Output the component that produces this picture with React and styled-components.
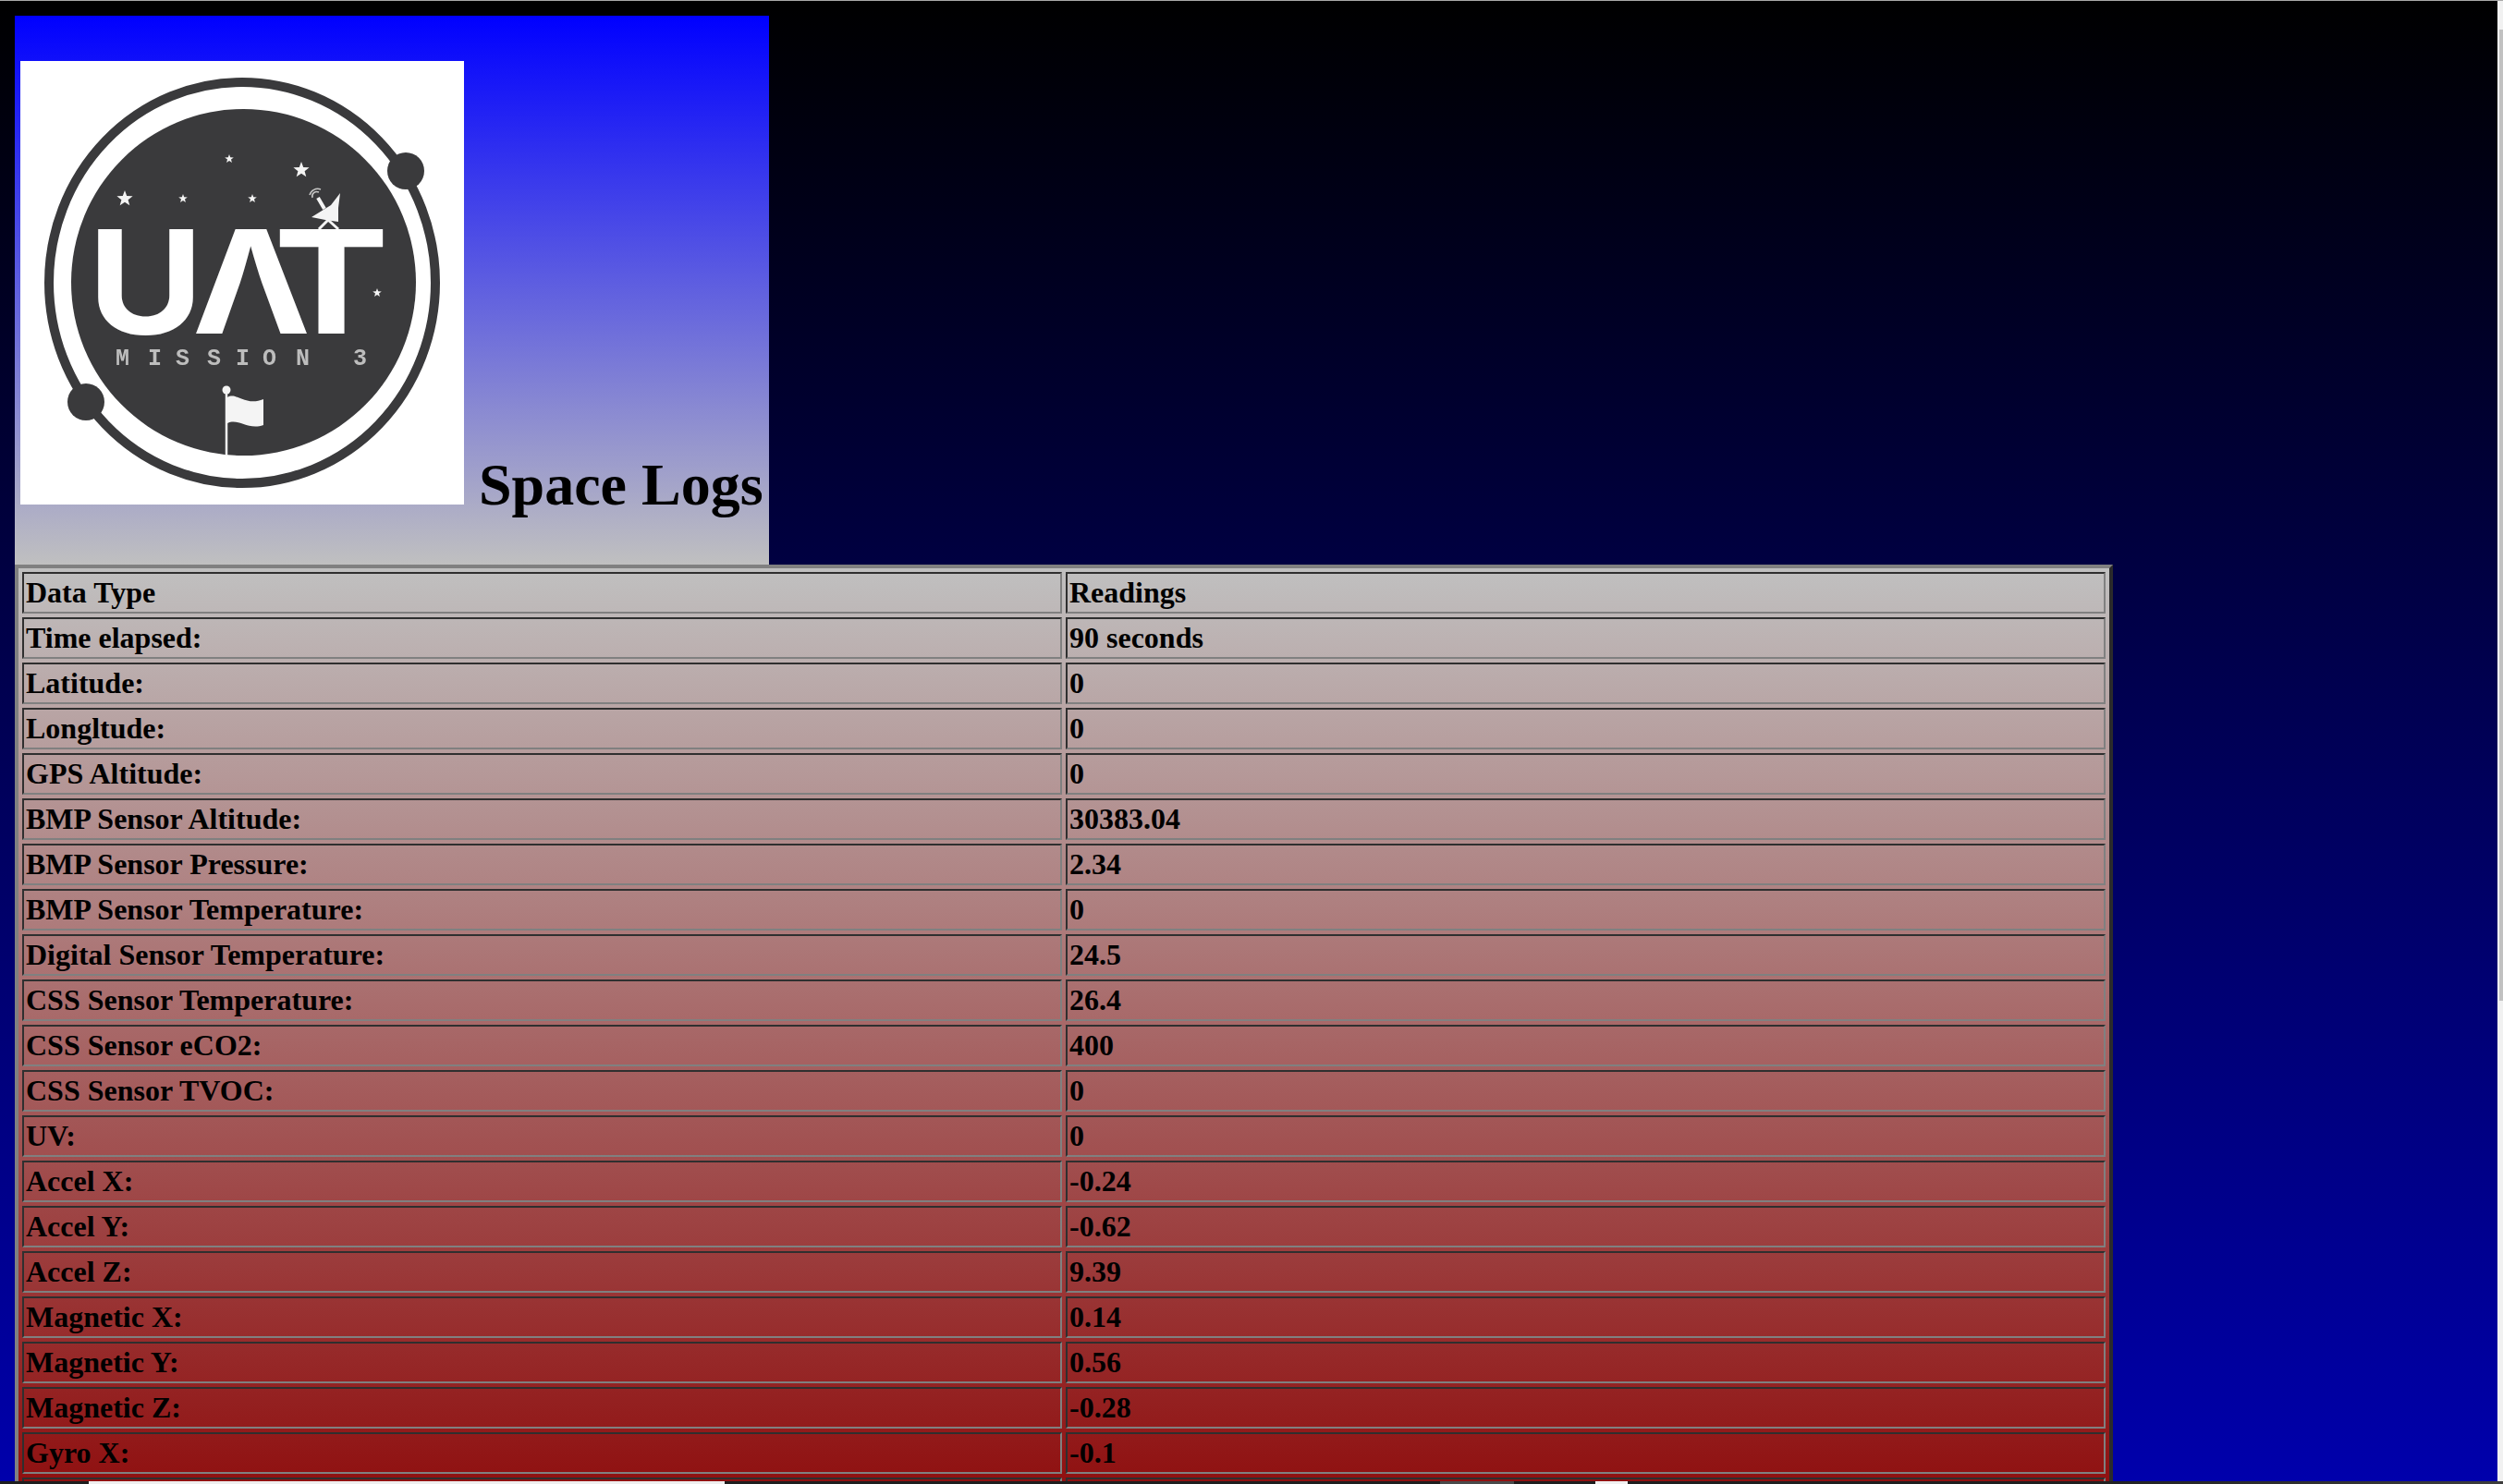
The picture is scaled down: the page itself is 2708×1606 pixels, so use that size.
import React from "react";
import styled, { createGlobalStyle } from "styled-components";

const Global = createGlobalStyle`
  html, body {
    margin: 0;
    height: 1606px;
    overflow: hidden;
  }
  body {
    background: linear-gradient(to bottom, #000000, #0000ac);
    color: #000;
    font-family: "Liberation Serif", "Times New Roman", serif;
  }
`;

const Page = styled.main`
  padding: 17px 0 0 16px;
`;

const Header = styled.header`
  width: fit-content;
  padding: 49px 6px 54px 6px;
  background: linear-gradient(to bottom, #0000ff, #c0c0c0);
`;

const Title = styled.h1`
  margin: 0;
  font-size: 64px;
  font-weight: 700;
  line-height: 1;
  white-space: pre;
`;

const LogoSvg = styled.svg`
  display: inline-block;
  width: 480px;
  height: 480px;
  vertical-align: baseline;
  background: #fff;
`;

const Table = styled.table`
  width: 2270px;
  table-layout: fixed;
  border-collapse: separate;
  border-spacing: 4px;
  border-style: solid;
  border-width: 4px;
  border-color: #808080 #2b2b2b #2b2b2b #808080;
  background: linear-gradient(to bottom, #c0c0c0, #8b0000);
  font-size: 32px;
  font-weight: 700;
`;

const Cell = styled.td`
  padding: 2px;
  border-style: solid;
  border-width: 2px;
  border-color: #2f2f2f #808080 #808080 #2f2f2f;
  line-height: 37px;
  white-space: nowrap;
`;

const TopLine = styled.div`
  position: fixed;
  inset: 0 0 auto 0;
  height: 1px;
  background: #a8a8a8;
`;

const ScrollTrack = styled.div`
  position: fixed;
  top: 1px;
  right: 0;
  bottom: 3px;
  width: 6px;
  background: #f1f1f1;
`;

const ScrollThumb = styled.div`
  width: 4px;
  height: 1051px;
  margin: 31px 0 0 2px;
  background: #c1c1c1;
`;

const BottomStrip = styled.div`
  position: fixed;
  inset: auto 0 0 0;
  height: 3px;
  display: flex;
  background: linear-gradient(to right, #1e1e1e 0%, #1e1e1e 82%, #3c3c3c 100%);
`;

const StripPiece = styled.span`
  display: block;
  width: ${(p) => p.$w}px;
  margin-left: ${(p) => p.$gap}px;
  background: ${(p) => p.$color};
`;

const Star = ({ x, y, r }) => {
  const pts = [];
  for (let i = 0; i < 10; i++) {
    const a = -Math.PI / 2 + (i * Math.PI) / 5;
    const d = i % 2 === 0 ? r : r * 0.42;
    pts.push(`${(x + d * Math.cos(a)).toFixed(1)},${(y + d * Math.sin(a)).toFixed(1)}`);
  }
  return <polygon points={pts.join(" ")} fill="#f4f4f4" />;
};

const LogoLetter = styled.text`
  font-family: Inter, "Liberation Sans", sans-serif;
  font-weight: 700;
  font-size: 155px;
  fill: #ffffff;
`;

const LogoCaption = styled.text`
  font-family: "Liberation Mono", monospace;
  font-size: 25px;
  fill: #bdbdbd;
`;

const Logo = () => (
  <LogoSvg viewBox="22 66 480 480" role="img" aria-label="UAT Mission 3 logo">
    <g style={{ filter: "blur(0.5px)" }}>
      <ellipse cx="262" cy="306" rx="209" ry="217" fill="none" stroke="#3a3a3c" strokeWidth="10" />
      <ellipse cx="263.5" cy="305.5" rx="186.5" ry="187.5" fill="#3a3a3c" />
      <circle cx="439" cy="185" r="20" fill="#3a3a3c" />
      <circle cx="93" cy="435" r="20" fill="#3a3a3c" />
      <Star x={135} y={215} r={9} />
      <Star x={326} y={184} r={9} />
      <Star x={248} y={172} r={5} />
      <Star x={198} y={215} r={5} />
      <Star x={273} y={215} r={5} />
      <Star x={408} y={317} r={5} />
      <polygon points="337,235 358,222 368,209 366,225 366,240 352,238" fill="#f4f4f4" />
      <path d="M355 238 L345 248 M355 238 L366 248" stroke="#f4f4f4" strokeWidth="3" fill="none" />
      <path d="M351 226 L344 214" stroke="#f4f4f4" strokeWidth="4" fill="none" />
      <path d="M338 214 a5 5 0 0 1 7 -6 M335 211 a9 9 0 0 1 12 -6" stroke="#c8c8c8" strokeWidth="1.5" fill="none" />
      <LogoLetter x="95" y="361" textLength="125" lengthAdjust="spacingAndGlyphs">U</LogoLetter>
      <LogoLetter x="208" y="361" textLength="128" lengthAdjust="spacingAndGlyphs">Λ</LogoLetter>
      <LogoLetter x="296" y="361" textLength="125" lengthAdjust="spacingAndGlyphs">T</LogoLetter>
      <LogoCaption x="125 160 190 224 255 284 320 382" y="395">MISSION3</LogoCaption>
      <line x1="245" y1="426" x2="245" y2="493" stroke="#f4f4f4" strokeWidth="2.5" />
      <circle cx="245" cy="422" r="4.5" fill="#f4f4f4" />
      <path d="M246 430 C256 424 266 440 285 432 L285 460 C268 466 258 452 246 458 Z" fill="#f4f4f4" />
    </g>
  </LogoSvg>
);

const rows = [
  ["Data Type", "Readings"],
  ["Time elapsed:", "90 seconds"],
  ["Latitude:", "0"],
  ["Longltude:", "0"],
  ["GPS Altitude:", "0"],
  ["BMP Sensor Altitude:", "30383.04"],
  ["BMP Sensor Pressure:", "2.34"],
  ["BMP Sensor Temperature:", "0"],
  ["Digital Sensor Temperature:", "24.5"],
  ["CSS Sensor Temperature:", "26.4"],
  ["CSS Sensor eCO2:", "400"],
  ["CSS Sensor TVOC:", "0"],
  ["UV:", "0"],
  ["Accel X:", "-0.24"],
  ["Accel Y:", "-0.62"],
  ["Accel Z:", "9.39"],
  ["Magnetic X:", "0.14"],
  ["Magnetic Y:", "0.56"],
  ["Magnetic Z:", "-0.28"],
  ["Gyro X:", "-0.1"],
  ["Gyro Y:", "0"],
  ["Gyro Z:", "0"],
];

export default function App() {
  return (
    <>
      <Global />
      <Page>
        <Header>
          <Title>
            <Logo /> Space Logs
          </Title>
        </Header>
        <Table>
          <tbody>
            {rows.map(([label, value]) => (
              <tr key={label}>
                <Cell>{label}</Cell>
                <Cell>{value}</Cell>
              </tr>
            ))}
          </tbody>
        </Table>
      </Page>
      <TopLine />
      <ScrollTrack>
        <ScrollThumb />
      </ScrollTrack>
      <BottomStrip>
        <StripPiece $gap={96} $w={688} $color="#eeeeee" />
        <StripPiece $gap={774} $w={80} $color="#4a4a4a" />
        <StripPiece $gap={88} $w={35} $color="#f0f0f0" />
      </BottomStrip>
    </>
  );
}
